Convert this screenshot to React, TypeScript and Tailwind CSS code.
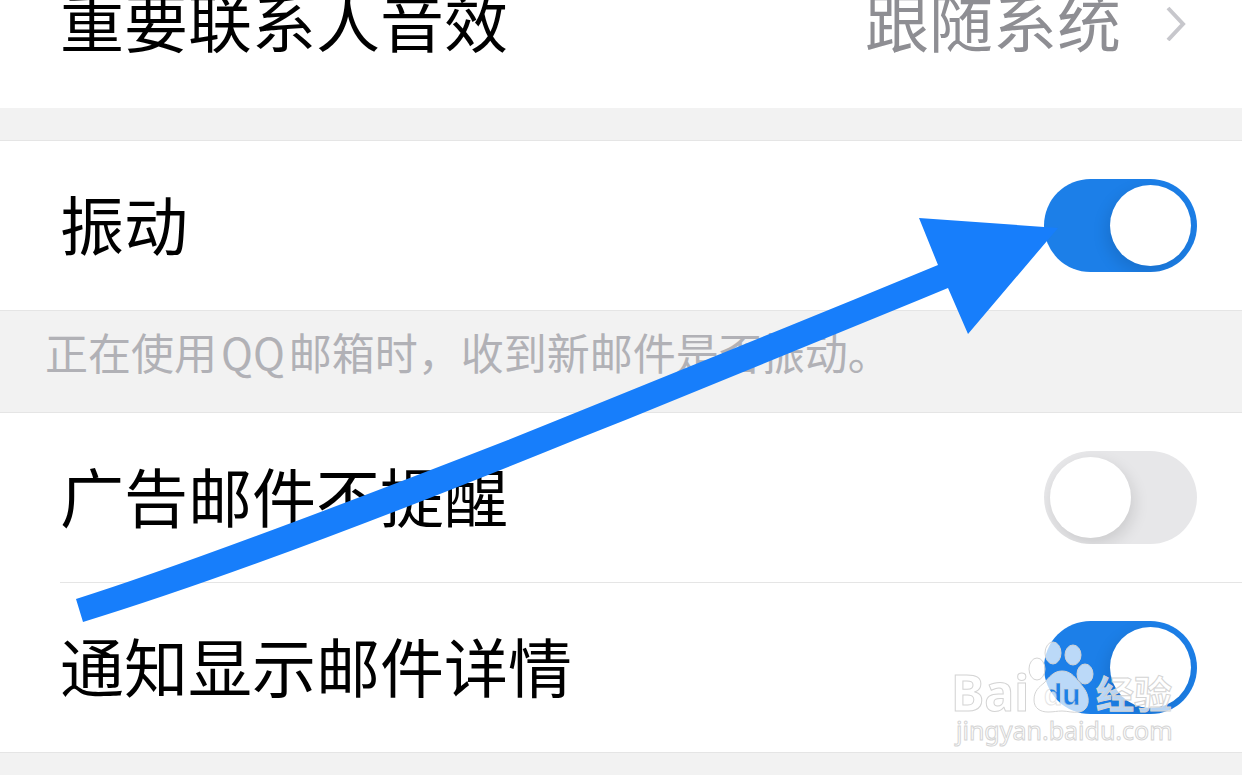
import { useState } from 'react';

interface SwitchRowProps {
  id: string;
  label: string;
  initial: boolean;
}

function SwitchRow({ id, label, initial }: SwitchRowProps) {
  const [on, setOn] = useState(initial);

  return (
    <div className="box-content flex h-[169px] items-center justify-between pr-[45px]">
      <label htmlFor={id} className="pb-2 text-[64px] leading-[96px]">
        {label}
      </label>
      <input
        id={id}
        type="checkbox"
        role="switch"
        checked={on}
        onChange={(e) => setOn(e.target.checked)}
        className="flex h-[93px] w-[153px] shrink-0 appearance-none items-center overflow-hidden rounded-full bg-[#e7e7e9] p-[6px] before:size-[81px] before:rounded-full before:bg-white before:shadow-[3px_6px_16px_rgba(0,0,0,0.12)] before:content-[''] checked:justify-end checked:bg-[#1c7fe8] checked:before:shadow-[-3px_6px_16px_rgba(0,0,0,0.12)]"
      />
    </div>
  );
}

// Hand-drawn pointer laid over the list
function Arrow() {
  return (
    <svg
      className="pointer-events-none absolute top-0 left-0"
      width="1242"
      height="775"
      viewBox="0 0 1242 775"
      fill="#177efb"
      aria-hidden="true"
    >
      <path d="M76 599Q200 560 508 440Q620 395 853 300L938 265L919 218L1058 228L968 334L948 288L919 300L628 419L575 440Q260 568 83 622Z" />
    </svg>
  );
}

function Watermark() {
  return (
    <svg
      className="pointer-events-none absolute right-[60px] bottom-[22px]"
      width="236"
      height="112"
      viewBox="946 641 236 112"
      fill="rgba(255,255,255,0.7)"
      stroke="#d4d4d4"
      strokeWidth="1"
      aria-hidden="true"
    >
      <mask id="pad" maskUnits="userSpaceOnUse" x="1030" y="665" width="64" height="52">
        <rect x="1030" y="665" width="64" height="52" fill="white" stroke="none" />
        <text x="1044" y="705" fontSize="30" fontWeight="700" fill="black" stroke="none" fontFamily="Liberation Sans, sans-serif">du</text>
      </mask>
      <text x="951" y="711" fontSize="50" fontWeight="700" fontFamily="Noto Sans, sans-serif">Bai</text>
      <ellipse cx="1037" cy="669" rx="8" ry="11" />
      <ellipse cx="1053" cy="653" rx="8" ry="11" />
      <ellipse cx="1073" cy="655" rx="8" ry="10" />
      <ellipse cx="1085" cy="674" rx="8" ry="10" />
      <path
        mask="url(#pad)"
        d="M1062 671C1053 671 1049 678 1044 683C1039 687 1034 691 1034 700C1034 708 1040 712 1048 712C1054 712 1057 711 1062 711C1068 711 1072 713 1079 712C1086 711 1089 705 1088 698C1087 691 1083 687 1079 682C1074 676 1070 671 1062 671Z"
      />
      <text x="1044" y="705" fontSize="30" fontWeight="700" fill="none" strokeOpacity="0.6" fontFamily="Liberation Sans, sans-serif">du</text>
      <text x="1096" y="708" fontSize="38" fontWeight="700" fontFamily="Noto Sans CJK SC, sans-serif">经验</text>
      <text x="956" y="740" fontSize="25" fontFamily="Noto Sans, sans-serif">jingyan.baidu.com</text>
    </svg>
  );
}

export default function App() {
  return (
    <div className="relative h-screen overflow-hidden bg-[#f2f2f2] font-['Noto_Sans_CJK_SC',sans-serif] text-black">
      {/* list is scrolled so that the first row is cut by the top edge */}
      <main className="-mt-[62px]">
        <section className="bg-white pl-[60px]">
          <button type="button" className="flex h-[170px] w-full items-center justify-between pr-[55px] text-[64px] leading-[96px]">
            <span className="pb-2">重要联系人音效</span>
            <span className="flex items-center gap-[45px] text-[#8e8e93]">
              <span className="pb-2">跟随系统</span>
              <svg width="21" height="36" viewBox="0 0 21 36" fill="none" stroke="#c7c7cc" strokeWidth="4" aria-hidden="true">
                <path d="M2 3L17 19L2 35" />
              </svg>
            </span>
          </button>
        </section>

        <section className="mt-8 border-y border-[#e5e5e5] bg-white pl-[60px]">
          <SwitchRow id="vibrate" label="振动" initial={true} />
        </section>
        <p className="h-[101px] pt-2 pl-[45px] text-[43px] leading-[64px] text-[#b1b1b6]">
          正在使用<span className="mx-1">QQ</span>邮箱时，收到新邮件是否振动。
        </p>

        <section className="divide-y divide-[#e5e5e5] border-y border-[#e5e5e5] bg-white pl-[60px]">
          <SwitchRow id="mute-ads" label="广告邮件不提醒" initial={false} />
          <SwitchRow id="show-detail" label="通知显示邮件详情" initial={true} />
        </section>
      </main>
      <Arrow />
      <Watermark />
    </div>
  );
}
